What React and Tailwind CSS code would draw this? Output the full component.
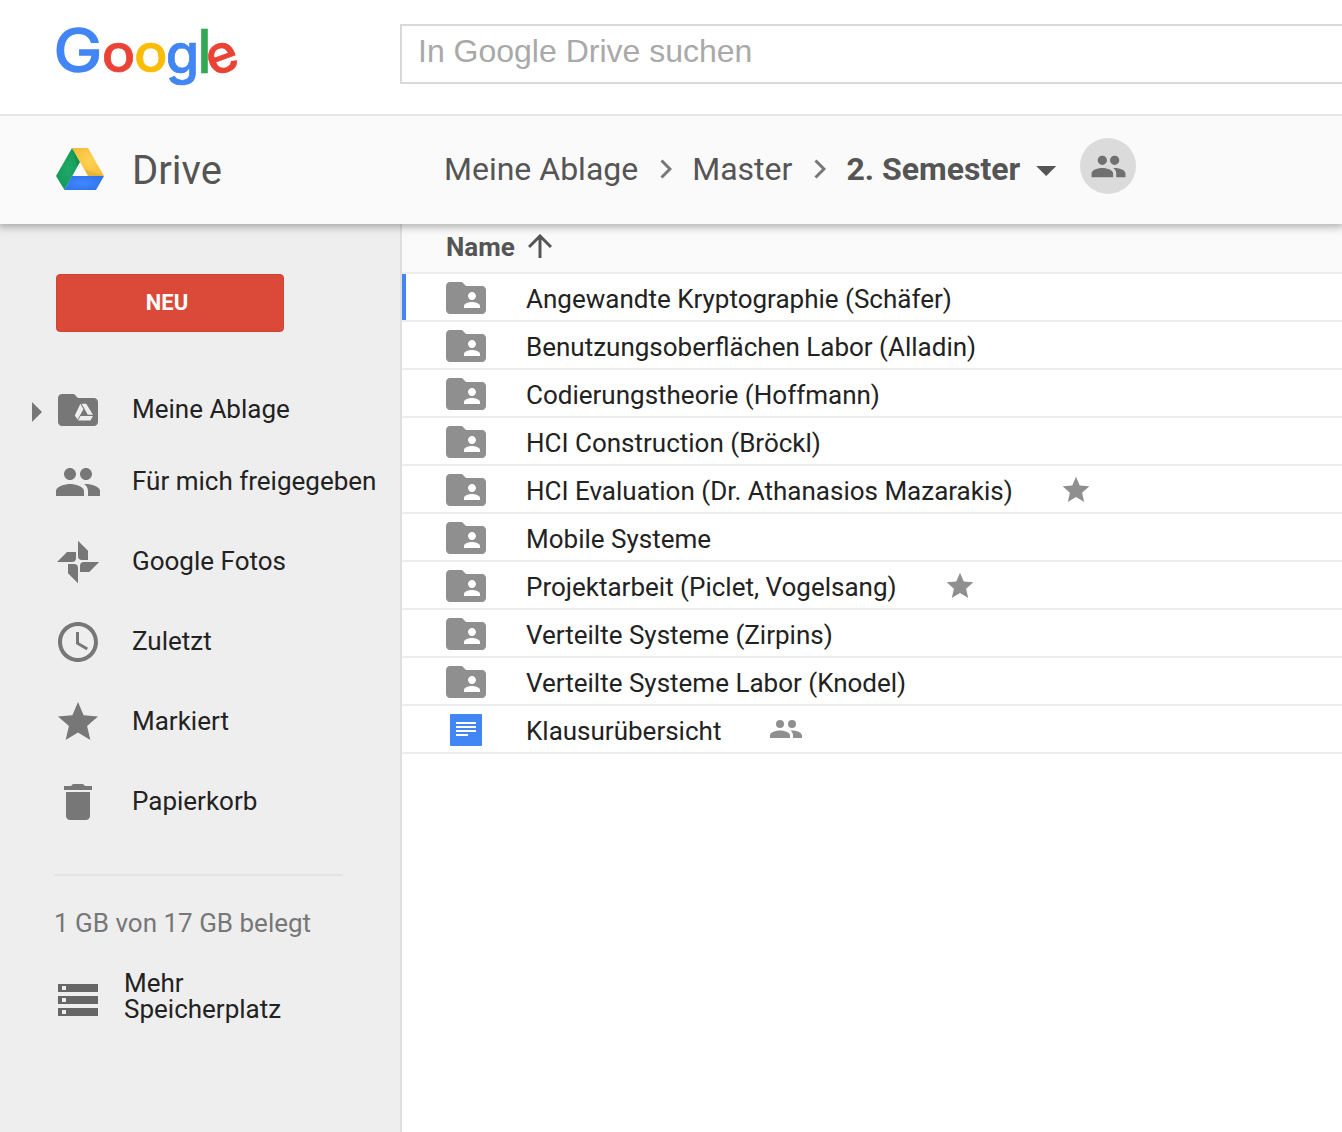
const PEOPLE = "M16 11c1.66 0 2.99-1.34 2.99-3S17.66 5 16 5s-3 1.34-3 3 1.34 3 3 3zm-8 0c1.66 0 2.99-1.34 2.99-3S9.66 5 8 5 5 6.34 5 8s1.34 3 3 3zm0 2c-2.33 0-7 1.17-7 3.5V19h14v-2.5c0-2.33-4.67-3.5-7-3.5zm8 0c-.29 0-.62.02-.97.05 1.16.84 1.97 1.97 1.97 3.45V19h6v-2.5c0-2.33-4.67-3.5-7-3.5z";
const STAR = "M12 17.27L18.18 21l-1.64-7.03L22 9.24l-7.19-.61L12 2 9.19 8.63 2 9.24l5.46 4.73L5.82 21z";
const SHARED = "M20 6h-8l-2-2H4c-1.1 0-1.99.9-1.99 2L2 18c0 1.1.9 2 2 2h16c1.1 0 2-.9 2-2V8c0-1.1-.9-2-2-2zm-5 3c1.1 0 2 .9 2 2s-.9 2-2 2-2-.9-2-2 .9-2 2-2zm4 8h-8v-1c0-1.33 2.67-2 4-2s4 .67 4 2v1z";
const FOLDER = "M20 6h-8l-2-2H4c-1.1 0-2 .9-2 2v12c0 1.1.9 2 2 2h16c1.1 0 2-.9 2-2V8c0-1.1-.9-2-2-2z";
const CLOCK = "M12 2C6.48 2 2 6.48 2 12s4.48 10 10 10 10-4.48 10-10S17.52 2 12 2zm0 18c-4.42 0-8-3.58-8-8s3.58-8 8-8 8 3.58 8 8-3.58 8-8 8zM12.5 7H11v6l5.25 3.15.75-1.23-4.5-2.67z";
const TRASH = "M6 19c0 1.1.9 2 2 2h8c1.1 0 2-.9 2-2V7H6v12zM19 4h-3.5l-.7-.8q-.2-.2-.6-.2H9.8q-.4 0-.6.2L8.5 4H5v2h14V4z";
const STORAGE = "M2 20h20v-4H2v4zm2-3h2v2H4v-2zM2 4v4h20V4H2zm4 3H4V5h2v2zm-4 7h20v-4H2v4zm2-3h2v2H4v-2z";
const PHOTOS = "M12 1.4l5 5V11h-3q-2 0-2-2zM1.5 12l5-5H11v3q0 2-2 2zM22.6 12l-5 5H13v-3q0-2 2-2zM12 22.6l-5-5V13h3q2 0 2 2z";

function Icon({ d, className, children }) {
  return (
    <svg viewBox="0 0 24 24" fill="currentColor" className={className}>
      <path d={d} />
      {children}
    </svg>
  );
}

function GoogleLogo() {
  return (
    <svg viewBox="0 0 200 80" className="ml-[50px] mt-[16px] h-[80px] w-[200px] overflow-visible" fontFamily="Inter" fontSize="52" fontWeight="500">
      <text transform="translate(3.500 56) scale(1.09 1)" fontSize="60" fontWeight="400" fill="#4285f4" stroke="#4285f4" strokeWidth="1.600">G</text>
      <text transform="translate(51.700 56.200) scale(1.070 1.030)" fill="#ea4335" stroke="#ea4335" strokeWidth=".7">o</text>
      <text transform="translate(83.900 56.200) scale(1.070 1.030)" fill="#fbbc05" stroke="#fbbc05" strokeWidth=".7">o</text>
      <text transform="translate(115.800 56.500) scale(1.04 1.060)" fill="#4285f4" stroke="#4285f4" strokeWidth=".7">g</text>
      <text transform="translate(147.300 56.500) scale(1.1 1.160)" fill="#34a853" stroke="#34a853" strokeWidth=".5">l</text>
      <text transform="translate(162.300 61) rotate(-20) scale(1.030 1.020)" fill="#ea4335" stroke="#ea4335" strokeWidth=".7">e</text>
    </svg>
  );
}

function DriveLogo() {
  return (
    <svg viewBox="0 0 48 42" className="mb-[2px] h-[42px] w-12">
      <defs>
        <radialGradient id="green" cx="50%" cy="50%" r="60%"><stop stopColor="#1fa965" /><stop offset="1" stopColor="#119858" /></radialGradient>
        <radialGradient id="yellow" cx="55%" cy="45%" r="60%"><stop stopColor="#ffd153" /><stop offset="1" stopColor="#f3bf3a" /></radialGradient>
        <radialGradient id="blue" cx="45%" cy="50%" r="60%"><stop stopColor="#4387fd" /><stop offset="1" stopColor="#3074ee" /></radialGradient>
      </defs>
      <path d="M16 0L24 14 8.5 42 0 28z" fill="url(#green)" />
      <path d="M16 0h16l16 28H32z" fill="url(#yellow)" />
      <path d="M16 28h32l-8 14H8.5z" fill="url(#blue)" />
      <path d="M29 21.5L48 28H32z" fill="#d9a52f" opacity=".5" />
      <path d="M16 0l8 14-3 4z" fill="#087b43" opacity=".35" />
    </svg>
  );
}

function SmallPeople() {
  return (
    <svg viewBox="0 0 32 18" fill="currentColor" className="ml-[49px] mb-px h-[18px] w-8">
      <circle cx="10" cy="4" r="4" />
      <circle cx="22" cy="4" r="4" />
      <path d="M0 18v-2.400C0 12 6 10.500 10 10.500s10 1.500 10 5.100V18zM20.500 10.600C25 10.200 32 12 32 15.600V18h-9v-2.400c0-2.200-1-3.800-2.500-5z" />
    </svg>
  );
}

const files = [
  { name: "Angewandte Kryptographie (Schäfer)", selected: true },
  { name: "Benutzungsoberflächen Labor (Alladin)" },
  { name: "Codierungstheorie (Hoffmann)" },
  { name: "HCI Construction (Bröckl)" },
  { name: "HCI Evaluation (Dr. Athanasios Mazarakis)", star: true },
  { name: "Mobile Systeme" },
  { name: "Projektarbeit (Piclet, Vogelsang)", star: true },
  { name: "Verteilte Systeme (Zirpins)" },
  { name: "Verteilte Systeme Labor (Knodel)" },
  { name: "Klausurübersicht", doc: true },
];

function FileRow({ file }) {
  return (
    <div className="flex h-12 items-center border-b-2 border-[#ececec]">
      <div className={file.selected ? "h-full w-1 bg-[#4285f4]" : "h-full w-1"} />
      {file.doc ? (
        <svg viewBox="0 0 32 32" className="ml-11 mr-11 mt-[2px] h-8 w-8">
          <rect width="32" height="32" rx="1" fill="#4285f4" />
          <path d="M6 8h20v2H6zM6 12h20v2H6zM6 16h20v2H6zM6 20h12v2H6z" fill="#fff" />
        </svg>
      ) : (
        <Icon d={SHARED} className="ml-9 mr-9 mt-[2px] h-12 w-12 shrink-0 text-[#8f8f8f]" />
      )}
      <span className="pt-[3px] text-[26px] leading-[30px] text-[#222]">{file.name}</span>
      {file.star && <Icon d={STAR} className="ml-[47px] mt-[2px] h-8 w-8 text-[#8f8f8f]" />}
      {file.doc && <span className="text-[#8f8f8f]"><SmallPeople /></span>}
    </div>
  );
}

function NavItem({ d, label, first, children }) {
  return (
    <div className={first ? "flex h-[72px] items-start" : "flex h-20 items-start"}>
      <div className="w-[54px] pl-8 pt-4">
        {first && <div className="h-5 w-[10px] bg-[#777] [clip-path:polygon(0_0,100%_50%,0_100%)]" />}
      </div>
      <Icon d={d} className="h-12 w-12 text-[#777]">{children}</Icon>
      <span className="ml-[30px] mt-2 whitespace-nowrap text-[26px] leading-[30px] text-[#222]">{label}</span>
    </div>
  );
}

function Chevron() {
  return (
    <svg viewBox="0 0 12 20" className="h-5 w-3" fill="none" stroke="#777" strokeWidth="3">
      <path d="M1.500 1.500L10 10l-8.500 8.500" />
    </svg>
  );
}

export default function App() {
  return (
    <div className="flex h-[1132px] w-[1342px] flex-col overflow-hidden bg-white font-['Roboto',sans-serif]">
      <header className="flex h-[114px] shrink-0">
        <div className="w-[400px]"><GoogleLogo /></div>
        <div className="mt-6 h-[60px] flex-1 border-2 border-r-0 border-[#d9d9d9] pl-4 pt-[6px] font-['Liberation_Sans',sans-serif] text-[32px] leading-[38px] text-[#a9a9a9]">
          In Google Drive suchen
        </div>
      </header>
      <div className="z-10 flex h-[110px] shrink-0 border-t-2 border-[#e5e5e5] bg-[#fafafa] text-[#555] shadow-[0_1px_8px_2px_rgba(0,0,0,0.3)] [clip-path:inset(0_0_-20px_0)]">
        <div className="flex h-[108px] w-[400px] items-center pl-14">
          <DriveLogo />
          <span className="ml-7 pt-[2px] text-[40px]">Drive</span>
        </div>
        <div className="flex h-[106px] items-center pl-11 text-[32px]">
          <span>Meine Ablage</span>
          <span className="ml-[22px] mr-5"><Chevron /></span>
          <span>Master</span>
          <span className="ml-[22px] mr-5"><Chevron /></span>
          <span className="font-bold">2. Semester</span>
          <div className="ml-4 mt-1 h-[10px] w-5 bg-[#555] [clip-path:polygon(0_0,100%_0,50%_100%)]" />
          <div className="mb-[6px] ml-6 flex h-14 w-14 items-center justify-center rounded-full bg-[#dbdbdb]">
            <Icon d={PEOPLE} className="h-[37px] w-[37px] text-[#707070]" />
          </div>
        </div>
      </div>
      <div className="flex flex-1">
        <aside className="w-[402px] shrink-0 border-r-2 border-[#dedede] bg-[#eee]">
          <div className="ml-14 mt-[50px] flex h-[58px] w-[228px] items-center justify-center rounded-[4px] border border-[#d14333] bg-[#db4a39] pb-[2px] pr-[6px] text-[22px] font-bold text-white">
            NEU
          </div>
          <nav className="pt-[54px]">
            <NavItem d={FOLDER} label="Meine Ablage" first>
              <path d="M13.200 8.900l1.500 2.700-2.900 5.200-1.400-2.100zM13.800 8.900h2.300l3.400 5.500h-2.600zM13.300 15h6.200l-1.300 2.200h-6.200z" fill="#eee" />
            </NavItem>
            <NavItem d={PEOPLE} label="Für mich freigegeben" />
            <NavItem d={PHOTOS} label="Google Fotos" />
            <NavItem d={CLOCK} label="Zuletzt" />
            <NavItem d={STAR} label="Markiert" />
            <NavItem d={TRASH} label="Papierkorb" />
          </nav>
          <div className="ml-[54px] mt-4 w-[288px] border-t-2 border-[#e3e3e3] pt-8 text-[26px] leading-[30px] text-[#777]">
            1 GB von 17 GB belegt
          </div>
          <div className="ml-[54px] mt-8 flex">
            <Icon d={STORAGE} className="mt-[6px] h-12 w-12 text-[#666]" />
            <div className="ml-[22px] text-[26px] leading-[26px] text-[#222]">Mehr<br />Speicherplatz</div>
          </div>
        </aside>
        <main className="flex-1">
          <div className="flex h-[50px] items-center border-b-2 border-[#ececec] bg-[#fafafa] pb-1 pl-11 text-[26px] font-bold text-[#555]">
            <span className="pt-[2px]">Name</span>
            <svg viewBox="0 0 24 24" className="ml-[13px] h-6 w-6" fill="none" stroke="#555" strokeWidth="3">
              <path d="M12 24V2M1 13L12 2l11 11" />
            </svg>
          </div>
          {files.map((file) => <FileRow key={file.name} file={file} />)}
        </main>
      </div>
    </div>
  );
}
